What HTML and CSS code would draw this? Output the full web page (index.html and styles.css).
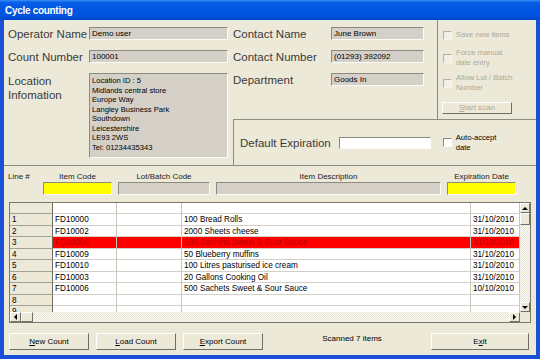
FILE: index.html
```html
<!DOCTYPE html>
<html lang="en">
<head>
    <meta charset="UTF-8">
    <title>Cycle counting</title>
    <link rel="stylesheet" href="styles.css">
</head>
<body>

<div class="window">
    <div class="titlebar">Cycle counting</div>

    <div class="frame">
        <div class="top">
            <div class="info">
                <div class="field">
                    <span class="label">Operator Name</span>
                    <div class="box">Demo user</div>
                </div>
                <div class="field">
                    <span class="label">Count Number</span>
                    <div class="box">100001</div>
                </div>
                <div class="field tall">
                    <span class="label">Location Infomation</span>
                    <div class="box address">
                        Location ID : 5<br>
                        Midlands central store<br>
                        Europe Way<br>
                        Langley Business Park<br>
                        Southdown<br>
                        Leicestershire<br>
                        LE93 2WS<br>
                        Tel: 01234435343
                    </div>
                </div>
            </div>

            <div class="contact">
                <div class="field">
                    <span class="label">Contact Name</span>
                    <div class="box">June Brown</div>
                </div>
                <div class="field">
                    <span class="label">Contact Number</span>
                    <div class="box">(01293) 392092</div>
                </div>
                <div class="field">
                    <span class="label">Department</span>
                    <div class="box">Goods In</div>
                </div>
            </div>

            <div class="options">
                <div class="check opt1"><span class="tick"></span><span>Save new items</span></div>
                <div class="check opt2"><span class="tick"></span><span>Force manual<br>date entry</span></div>
                <div class="check opt3"><span class="tick"></span><span>Allow Lot / Batch<br>Number</span></div>
                <div class="btn small disabled"><u>S</u>tart scan</div>
            </div>

            <div class="expiry">
                <span class="exp-label">Default Expiration</span>
                <div class="box white"></div>
                <div class="check auto"><span class="tick on"></span><span>Auto-accept<br>date</span></div>
            </div>
        </div>

        <div class="entry">
            <span class="col-label left">Line #</span>
            <span class="col-label">Item Code</span>
            <span class="col-label">Lot/Batch Code</span>
            <span class="col-label">Item Description</span>
            <span class="col-label">Expiration Date</span>
            <span></span>
            <div class="box yellow"></div>
            <div class="box"></div>
            <div class="box"></div>
            <div class="box yellow"></div>
        </div>

        <div class="grid">
            <div class="rows">
                <div class="row head"><div class="rh"></div><div></div><div></div><div></div><div></div></div>
                <div class="row"><div class="rh">1</div><div>FD10000</div><div></div><div>100 Bread Rolls</div><div>31/10/2010</div></div>
                <div class="row"><div class="rh">2</div><div>FD10002</div><div></div><div>2000 Sheets cheese</div><div>31/10/2010</div></div>
                <div class="row error"><div class="rh">3</div><div>FD10006</div><div></div><div>500 Sachets Sweet &amp; Sour Sauce</div><div>31/10/2010</div></div>
                <div class="row"><div class="rh">4</div><div>FD10009</div><div></div><div>50 Blueberry muffins</div><div>31/10/2010</div></div>
                <div class="row"><div class="rh">5</div><div>FD10010</div><div></div><div>100 Litres pasturised ice cream</div><div>31/10/2010</div></div>
                <div class="row"><div class="rh">6</div><div>FD10003</div><div></div><div>20 Gallons Cooking Oil</div><div>31/10/2010</div></div>
                <div class="row"><div class="rh">7</div><div>FD10006</div><div></div><div>500 Sachets Sweet &amp; Sour Sauce</div><div>10/10/2010</div></div>
                <div class="row"><div class="rh">8</div><div></div><div></div><div></div><div></div></div>
                <div class="row"><div class="rh">9</div><div></div><div></div><div></div><div></div></div>
            </div>
            <div class="vscroll">
                <div class="sb-btn"><span class="arrow up"></span></div>
                <div class="sb-btn thumb"></div>
                <div class="track"></div>
                <div class="sb-btn"><span class="arrow down"></span></div>
            </div>
            <div class="hscroll">
                <div class="sb-btn"><span class="arrow left"></span></div>
                <div class="sb-btn thumb"></div>
                <div class="track"></div>
                <div class="sb-btn"><span class="arrow right"></span></div>
            </div>
            <div class="corner"></div>
        </div>

        <div class="actions">
            <div class="btn"><u>N</u>ew Count</div>
            <div class="btn"><u>L</u>oad Count</div>
            <div class="btn"><u>E</u>xport Count</div>
            <span class="status">Scanned 7 items</span>
            <div class="btn exit">E<u>x</u>it</div>
        </div>
    </div>
</div>

</body>
</html>
```

FILE: styles.css
```css
/* General styles */
body {
    margin: 0;
    padding: 0;
    font-family: "Liberation Sans", Arial, sans-serif;
}

.window {
    width: 540px;
    height: 359px;
    display: flex;
    flex-direction: column;
    background-color: #ece9d8;
    color: #000;
}

.titlebar {
    flex: none;
    height: 20px;
    padding-left: 5px;
    line-height: 22px;
    font-size: 10px;
    letter-spacing: -0.3px;
    font-weight: bold;
    color: #fff;
    background: linear-gradient(to bottom, #3d8df5 0%, #0a5fe8 12%, #0056e2 45%, #0053df 80%, #0046c8 100%);
}

.frame {
    flex: 1;
    display: flex;
    flex-direction: column;
    border: 4px solid #1a4fd8;
    border-top: 0;
}

/* Top panel */
.top {
    display: grid;
    grid-template-columns: 229px 204px 99px;
    grid-template-rows: 99px 46px;
    border-bottom: 1px solid #8e8c80;
}

.info {
    grid-row: 1 / 3;
    padding: 7px 0 0 4px;
    display: flex;
    flex-direction: column;
    gap: 10px;
}

.contact {
    padding: 7px 0 0 0;
    display: flex;
    flex-direction: column;
    gap: 10px;
}

.field {
    display: flex;
    align-items: center;
}

.field .label {
    width: 81px;
    font-size: 11.5px;
    color: #3a3a3a;
    white-space: nowrap;
}

.contact .field .label {
    width: 98px;
}

.field.tall {
    align-items: flex-start;
}

.field.tall .label {
    white-space: normal;
    line-height: 14px;
    margin-top: 1px;
}

.box {
    width: 139px;
    height: 13px;
    box-sizing: border-box;
    background-color: #d4d0c8;
    border: 1px solid;
    border-color: #8c8a7e #fbfbf8 #fbfbf8 #8c8a7e;
    padding-left: 2px;
    font-size: 8px;
    line-height: 11px;
    white-space: nowrap;
    overflow: hidden;
}

.contact .box {
    width: 93px;
}

.box.address {
    height: 85px;
    padding-top: 2px;
    font-size: 7.6px;
    line-height: 9.5px;
}

.box.white {
    width: 92px;
    height: 12px;
    background-color: #fff;
    margin-left: 8px;
}

.box.yellow {
    background-color: #ffff00;
}

/* Options */
.options {
    border-left: 1px solid #8e8c80;
    padding: 10px 0 0 5px;
    color: #aca899;
    font-size: 7.6px;
}

.check {
    display: flex;
    align-items: center;
    gap: 4px;
    line-height: 10px;
}

.tick {
    width: 9px;
    height: 9px;
    box-sizing: border-box;
    border: 1px solid;
    border-color: #b6b3a6 #f6f5f0 #f6f5f0 #b6b3a6;
    background-color: #f1efe6;
    flex: none;
}

.tick.on {
    border-color: #8c8a7e #fff #fff #8c8a7e;
    background-color: #fff;
}

.opt2 {
    margin-top: 8px;
}

.opt3 {
    margin-top: 5px;
}

.expiry {
    grid-column: 2 / 4;
    border-top: 1px solid #8e8c80;
    border-left: 1px solid #8e8c80;
    display: flex;
    align-items: center;
    padding-left: 6px;
}

.exp-label {
    font-size: 11.5px;
    color: #3a3a3a;
}

.check.auto {
    margin-left: 12px;
    font-size: 7.6px;
    color: #000;
}

/* Buttons */
.btn {
    width: 80px;
    height: 17px;
    box-sizing: border-box;
    border: 1px solid;
    border-color: #fff #716f64 #716f64 #fff;
    background-color: #ece9d8;
    text-align: center;
    font-size: 8px;
    line-height: 15px;
}

.btn.small {
    width: 70px;
    height: 12px;
    line-height: 10px;
    margin: 9px 0 0 -1px;
}

.btn.disabled {
    color: #aca899;
}

/* Entry row */
.entry {
    display: grid;
    grid-template-columns: 29px 69px 92px 225px 69px;
    grid-template-rows: 11px 13px;
    column-gap: 6px;
    padding: 5px 0 0 4px;
}

.entry .box {
    width: auto;
}

.col-label {
    font-size: 8px;
    line-height: 11px;
    text-align: center;
    color: #222;
    white-space: nowrap;
}

.col-label.left {
    text-align: left;
}

/* Grid */
.grid {
    margin: 7px 0 0 5px;
    width: 522px;
    height: 121px;
    box-sizing: border-box;
    border: 1px solid #7a7868;
    display: grid;
    grid-template-columns: 510px 10px;
    grid-template-rows: 109px 10px;
}

.rows {
    overflow: hidden;
    background-color: #fff;
}

.row {
    display: grid;
    grid-template-columns: 43px 64px 65px 289px 49px;
    height: 11.5px;
}

.row.head {
    height: 11px;
}

.row > div {
    box-sizing: border-box;
    border-right: 1px solid #c9c7bd;
    border-bottom: 1px solid #d2d0c6;
    padding-left: 2px;
    font-size: 8.2px;
    line-height: 11px;
    white-space: nowrap;
    overflow: hidden;
}

.row > .rh {
    background-color: #ece9d8;
    border-right: 1px solid #6e6c60;
    border-bottom: 1px solid #a3a195;
}

.row.error > div:not(.rh) {
    background-color: #ff0000;
    color: #b80000;
}

.vscroll {
    display: flex;
    flex-direction: column;
}

.hscroll {
    display: flex;
}

.track {
    flex: 1;
    background-color: #f4f3ee;
    background-image: repeating-conic-gradient(#e6e3d3 0 25%, #fbfbf8 0 50%);
    background-size: 2px 2px;
}

.sb-btn {
    flex: none;
    width: 10px;
    height: 10px;
    box-sizing: border-box;
    border: 1px solid;
    border-color: #fff #716f64 #716f64 #fff;
    background-color: #ece9d8;
    display: flex;
    align-items: center;
    justify-content: center;
}

.hscroll .sb-btn {
    width: 11px;
}

.vscroll .thumb {
    height: 12px;
}

.hscroll .thumb {
    width: 12px;
}

.arrow {
    width: 0;
    height: 0;
    border: 3px solid transparent;
}

.arrow.up {
    border-bottom-color: #000;
    border-top-width: 0;
}

.arrow.down {
    border-top-color: #000;
    border-bottom-width: 0;
}

.arrow.left {
    border-right-color: #000;
    border-left-width: 0;
}

.arrow.right {
    border-left-color: #000;
    border-right-width: 0;
}

.corner {
    background-color: #ece9d8;
}

/* Bottom actions */
.actions {
    display: flex;
    margin-top: 10px;
    padding-left: 5px;
    gap: 7px;
}

.status {
    flex: 1;
    text-align: center;
    font-size: 8px;
    line-height: 12px;
    padding-left: 10px;
}

.btn.exit {
    width: 98px;
    margin-right: 7px;
}
```
